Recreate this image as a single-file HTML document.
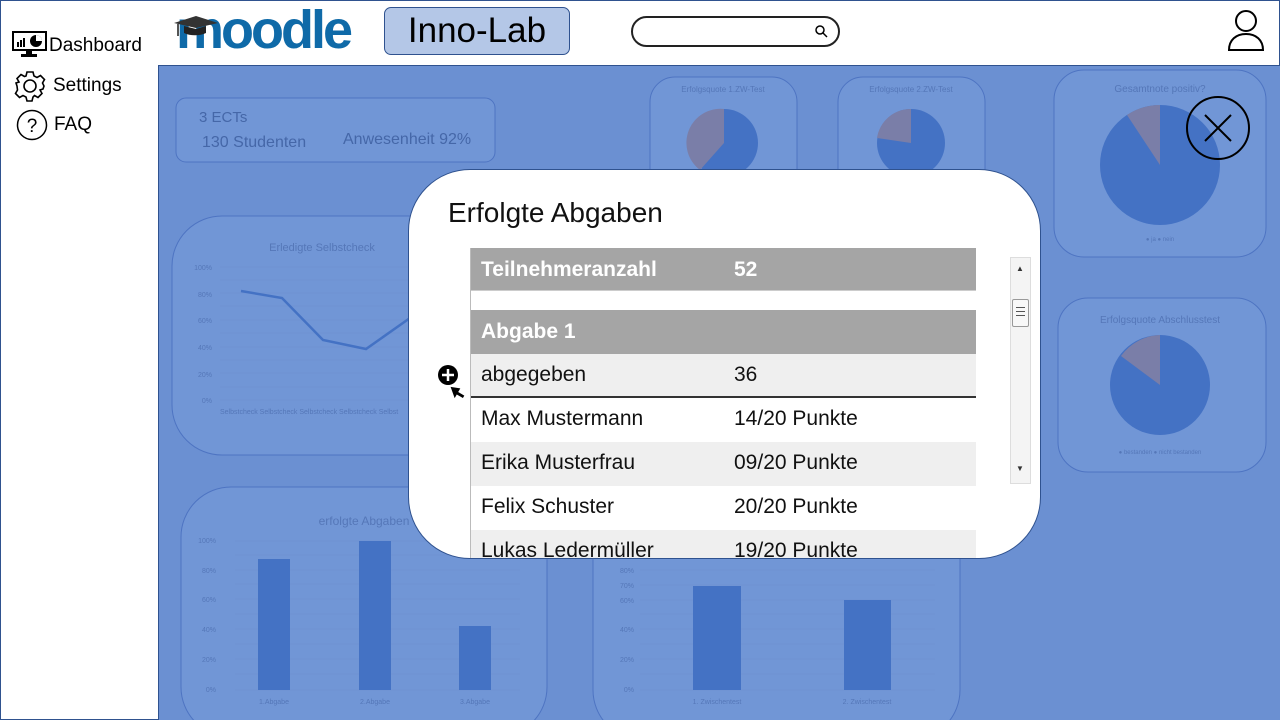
<!DOCTYPE html>
<html><head><meta charset="utf-8"><style>
*{margin:0;padding:0;box-sizing:border-box}
body{width:1280px;height:720px;overflow:hidden;font-family:"Liberation Sans",sans-serif;background:#fff;position:relative}
.abs{position:absolute}
</style></head><body>
<div class="abs" style="left:0;top:0;width:159px;height:720px;background:#fff;border:1px solid #2f528f;border-right:1.5px solid #2f528f"></div>
<svg class="abs" style="left:12px;top:31px" width="36" height="26" viewBox="0 0 36 26">
<rect x="1" y="1" width="33" height="18" fill="#fff" stroke="#000" stroke-width="2"/>
<rect x="14" y="19" width="6" height="4" fill="#000"/><rect x="9" y="23" width="16" height="3" fill="#000"/>
<rect x="5" y="11" width="2" height="5"/><rect x="8" y="9" width="2" height="7"/><rect x="11" y="7" width="2" height="9"/>
<circle cx="24" cy="10" r="6" fill="#000"/><path d="M24 10V4A6 6 0 0 1 30 10Z" fill="#fff"/>
</svg>
<div class="abs" style="left:49px;top:35px;font-size:19px">Dashboard</div>
<svg class="abs" style="left:14px;top:70px" width="32" height="32" viewBox="0 0 32 32"><g fill="none" stroke="#000" stroke-width="1.6">
<path d="M13 2h6l1 4 3 1.5 3.5-2 4 4-2 3.5L30 16l-1 3 -3 1 2 3.5-4 4-3.5-2L19 27l-1 4h-5l-1-4-3-1.5-3.5 2-4-4 2-3.5L3 16l-1-3 3-1-2-3.5 4-4 3.5 2L12 6z"/><circle cx="16" cy="16" r="6"/></g></svg>
<div class="abs" style="left:53px;top:75px;font-size:19px">Settings</div>
<svg class="abs" style="left:16px;top:109px" width="32" height="32" viewBox="0 0 32 32"><circle cx="16" cy="16" r="14.5" fill="none" stroke="#000" stroke-width="1.5"/><text x="16" y="23" text-anchor="middle" font-size="19" font-family="Liberation Sans">?</text></svg>
<div class="abs" style="left:54px;top:114px;font-size:19px">FAQ</div>
<div class="abs" style="left:158px;top:0;width:1122px;height:66px;background:#fff;border:1px solid #2f528f;border-left:none;border-bottom:1.5px solid #2f528f"></div>
<div class="abs" style="left:176px;top:2px;font-size:54px;line-height:56px;font-weight:bold;color:#0f6aa8;letter-spacing:-3px">moodle</div>
<svg class="abs" style="left:172px;top:14px" width="50" height="26" viewBox="0 0 50 26"><path d="M2 9L24 2L46 9L24 14Z" fill="#333"/><path d="M12 12v7c6 3 16 3 22 0v-7l-10 3z" fill="#222"/><path d="M6 10v12" stroke="#555" stroke-width="2"/></svg>
<div class="abs" style="left:384px;top:7px;width:186px;height:48px;background:#b4c7e7;border:1px solid #2f528f;border-radius:7px;font-size:35px;text-align:center;line-height:46px">Inno-Lab</div>
<div class="abs" style="left:631px;top:16px;width:209px;height:31px;border:2px solid #222;border-radius:16px"></div>
<svg class="abs" style="left:814px;top:24px" width="14" height="14"><circle cx="6" cy="6" r="4" fill="none" stroke="#000" stroke-width="1.5"/><path d="M9 9l4 4" stroke="#000" stroke-width="1.5"/></svg>
<svg class="abs" style="left:1226px;top:8px" width="40" height="44" viewBox="0 0 40 44"><circle cx="20" cy="13" r="10" fill="none" stroke="#000" stroke-width="2"/><path d="M3 42c0-10 7-16 17-16s17 6 17 16z" fill="none" stroke="#000" stroke-width="2"/></svg>
<div class="abs" style="left:159px;top:66px;width:1121px;height:654px;background:#6b90d2"></div>
<svg class="abs" style="left:159px;top:66px" width="1121" height="654" viewBox="159 66 1121 654">
<g stroke="#4e74c2" stroke-width="1" fill="#7196d6">
<rect x="176" y="98" width="319" height="64" rx="10"/>
<rect x="172" y="216" width="300" height="239" rx="50"/>
<rect x="650" y="77" width="147" height="120" rx="25"/>
<rect x="838" y="77" width="147" height="120" rx="25"/>
<rect x="1054" y="70" width="212" height="187" rx="30"/>
<rect x="1058" y="298" width="208" height="174" rx="30"/>
<rect x="181" y="487" width="366" height="250" rx="50"/>
<rect x="593" y="490" width="367" height="250" rx="50"/>
</g>
<g font-family="Liberation Sans" fill="#4567a8">
<text x="199" y="122" font-size="15">3 ECTs</text>
<text x="202" y="147" font-size="16">130 Studenten</text>
<text x="343" y="144" font-size="16">Anwesenheit 92%</text>
</g>
<g font-family="Liberation Sans" fill="#5577b8" font-size="8">
<text x="723" y="92" text-anchor="middle">Erfolgsquote 1.ZW-Test</text>
<text x="911" y="92" text-anchor="middle">Erfolgsquote 2.ZW-Test</text>
<text x="1160" y="92" text-anchor="middle" font-size="10">Gesamtnote positiv?</text>
<text x="1160" y="323" text-anchor="middle" font-size="10">Erfolgsquote Abschlusstest</text>
<text x="1160" y="241" text-anchor="middle" font-size="6">● ja  ● nein</text>
<text x="1160" y="454" text-anchor="middle" font-size="6">● bestanden   ● nicht bestanden</text>
<text x="322" y="251" text-anchor="middle" font-size="11">Erledigte Selbstcheck</text>
<text x="364" y="525" text-anchor="middle" font-size="12">erfolgte Abgaben</text>
</g>
<circle cx="724" cy="143" r="34" fill="#4472c4"/><path d="M724 143V109A34 34 0 0 0 700 170Z" fill="#7a7ea8"/>
<circle cx="911" cy="143" r="34" fill="#4472c4"/><path d="M911 143V109A34 34 0 0 0 877 138Z" fill="#7a7ea8"/>
<circle cx="1160" cy="165" r="60" fill="#4472c4"/><path d="M1160 165V105A60 60 0 0 0 1127 115Z" fill="#7a7ea8"/>
<circle cx="1160" cy="385" r="50" fill="#4472c4"/><path d="M1160 385V335A50 50 0 0 0 1121 356Z" fill="#7a7ea8"/>
<g stroke="#6f92d2" stroke-width="1">
<path d="M220 267H460M220 280H460M220 293H460M220 306H460M220 320H460M220 333H460M220 347H460M220 360H460M220 373H460M220 387H460M220 400H460"/>
</g>
<g font-family="Liberation Sans" fill="#5577b8" font-size="7">
<text x="212" y="270" text-anchor="end">100%</text><text x="212" y="297" text-anchor="end">80%</text><text x="212" y="323" text-anchor="end">60%</text><text x="212" y="350" text-anchor="end">40%</text><text x="212" y="377" text-anchor="end">20%</text><text x="212" y="403" text-anchor="end">0%</text>
<text x="220" y="414">Selbstcheck Selbstcheck Selbstcheck Selbstcheck Selbst</text>
</g>
<path d="M241 291L282 298L323 340L366 349L410 318" fill="none" stroke="#4472c4" stroke-width="2.5"/>
<g stroke="#6f92d2"><path d="M235 541H520M235 555H520M235 570H520M235 584H520M235 599H520M235 614H520M235 629H520M235 644H520M235 659H520M235 674H520M235 690H520"/></g>
<rect x="258" y="559" width="32" height="131" fill="#4472c4"/>
<rect x="359" y="541" width="32" height="149" fill="#4472c4"/>
<rect x="459" y="626" width="32" height="64" fill="#4472c4"/>
<g font-family="Liberation Sans" fill="#5577b8" font-size="7">
<text x="216" y="543" text-anchor="end">100%</text><text x="216" y="573" text-anchor="end">80%</text><text x="216" y="602" text-anchor="end">60%</text><text x="216" y="632" text-anchor="end">40%</text><text x="216" y="662" text-anchor="end">20%</text><text x="216" y="692" text-anchor="end">0%</text>
<text x="274" y="704" text-anchor="middle">1.Abgabe</text><text x="375" y="704" text-anchor="middle">2.Abgabe</text><text x="475" y="704" text-anchor="middle">3.Abgabe</text>
<text x="634" y="573" text-anchor="end">80%</text><text x="634" y="588" text-anchor="end">70%</text><text x="634" y="603" text-anchor="end">60%</text><text x="634" y="632" text-anchor="end">40%</text><text x="634" y="662" text-anchor="end">20%</text><text x="634" y="692" text-anchor="end">0%</text>
<text x="717" y="704" text-anchor="middle">1. Zwischentest</text><text x="867" y="704" text-anchor="middle">2. Zwischentest</text>
</g>
<g stroke="#6f92d2"><path d="M640 570H935M640 585H935M640 600H935M640 614H935M640 629H935M640 644H935M640 659H935M640 674H935M640 690H935"/></g>
<rect x="693" y="586" width="48" height="104" fill="#4472c4"/>
<rect x="844" y="600" width="47" height="90" fill="#4472c4"/>
<circle cx="1218" cy="128" r="31" fill="none" stroke="#000" stroke-width="2"/>
<path d="M1205 115L1231 141M1231 115L1205 141" stroke="#000" stroke-width="2"/>
</svg>
<div class="abs" style="left:408px;top:169px;width:633px;height:390px;background:#fff;border:1px solid #2f528f;border-radius:62px;overflow:hidden">
<div class="abs" style="left:39px;top:27px;font-size:28px;color:#111">Erfolgte Abgaben</div>
<div class="abs" style="left:61px;top:78px;width:507px;height:320px;border-left:1px solid #bbb"></div>
<div class="abs" style="left:62px;top:78px;width:505px;font-size:21px;color:#111">
<div style="height:43px;background:#a5a5a5;color:#fff;font-weight:bold;line-height:43px;position:relative;border-bottom:1px solid #ccc"><span style="position:absolute;left:10px">Teilnehmeranzahl</span><span style="position:absolute;left:263px">52</span></div>
<div style="height:19px"></div>
<div style="height:44px;background:#a5a5a5;color:#fff;font-weight:bold;line-height:44px;position:relative"><span style="position:absolute;left:10px">Abgabe 1</span></div>
<div style="height:44px;background:#efefef;line-height:42px;position:relative;border-bottom:2px solid #333"><span style="position:absolute;left:10px">abgegeben</span><span style="position:absolute;left:263px">36</span></div>
<div style="height:44px;background:#fff;line-height:42px;position:relative"><span style="position:absolute;left:10px">Max Mustermann</span><span style="position:absolute;left:263px">14/20 Punkte</span></div>
<div style="height:44px;background:#efefef;line-height:42px;position:relative"><span style="position:absolute;left:10px">Erika Musterfrau</span><span style="position:absolute;left:263px">09/20 Punkte</span></div>
<div style="height:44px;background:#fff;line-height:42px;position:relative"><span style="position:absolute;left:10px">Felix Schuster</span><span style="position:absolute;left:263px">20/20 Punkte</span></div>
<div style="height:44px;background:#efefef;line-height:42px;position:relative"><span style="position:absolute;left:10px">Lukas Ledermüller</span><span style="position:absolute;left:263px">19/20 Punkte</span></div>
</div>
<div class="abs" style="left:601px;top:87px;width:21px;height:227px;background:#f4f4f4;border:1px solid #ddd"></div>
<div class="abs" style="left:607px;top:94px;font-size:8px;color:#333">▲</div>
<div class="abs" style="left:607px;top:294px;font-size:8px;color:#333">▼</div>
<div class="abs" style="left:603px;top:129px;width:17px;height:28px;background:#f8f8f8;border:1px solid #999;border-radius:2px"></div>
<div class="abs" style="left:607px;top:137px;width:9px;height:9px;border-top:1px solid #555;border-bottom:1px solid #555"></div>
<div class="abs" style="left:607px;top:141px;width:9px;height:1px;background:#555"></div>
</div>
<svg class="abs" style="left:437px;top:364px" width="34" height="40" viewBox="0 0 34 40">
<circle cx="11" cy="11" r="10" fill="#000"/><path d="M11 5v12M5 11h12" stroke="#fff" stroke-width="2.5"/>
<path d="M17 24l1 12 3-3 5 5 2-2-5-5 3-3z" fill="#000" transform="rotate(-15 17 24) translate(-3 -2)"/>
</svg>
</body></html>
